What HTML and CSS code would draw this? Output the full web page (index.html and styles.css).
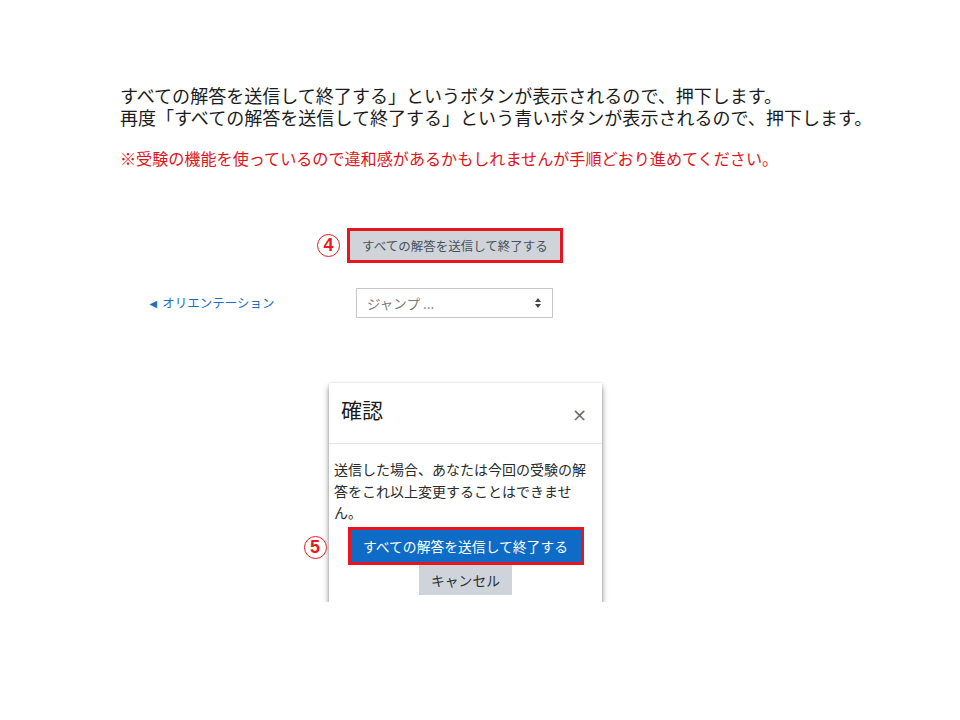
FILE: index.html
```html
<!DOCTYPE html>
<html lang="ja">
<head>
<meta charset="utf-8">
<link rel="stylesheet" href="styles.css">
</head>
<body>
<div class="intro">
  <p class="line">すべての解答を送信して終了する」というボタンが表示されるので、押下します。</p>
  <p class="line">再度「すべての解答を送信して終了する」という青いボタンが表示されるので、押下します。</p>
  <p class="note">※受験の機能を使っているので違和感があるかもしれませんが手順どおり進めてください。</p>
</div>

<div class="step4">
  <span class="num num4">4</span>
  <div class="hl hl4"><span class="btn-grey">すべての解答を送信して終了する</span></div>
</div>

<div class="navrow">
  <a class="prev">◄ オリエンテーション</a>
  <div class="select">
    <span class="sel-text">ジャンプ ...</span>
    <svg class="sel-arrows" width="8" height="12" viewBox="0 0 8 12"><path d="M4 1 L7 5 H1 Z M4 11 L1 7 H7 Z" fill="#444"/></svg>
  </div>
</div>

<div class="modal">
  <div class="modal-head">
    <span class="modal-title">確認</span>
    <span class="close">×</span>
  </div>
  <div class="modal-body">
    <p class="msg">送信した場合、あなたは今回の受験の解答をこれ以上変更することはできません。</p>
    <div class="actions">
      <div class="hl hl5">
        <span class="num num5">5</span>
        <span class="btn-blue">すべての解答を送信して終了する</span>
      </div>
      <span class="btn-cancel">キャンセル</span>
    </div>
  </div>
</div>
</body>
</html>
```
FILE: styles.css
```css
body {
  margin: 0;
  background: #fff;
  font-family: "Noto Sans CJK JP", "Noto Sans", sans-serif;
}
p { margin: 0; }

.intro {
  padding: 84px 0 0 120px;
}
.line {
  font-size: 18.05px;
  line-height: 22px;
  color: #1c1c1c;
  white-space: nowrap;
}
.note {
  margin-top: 19px;
  font-size: 16.1px;
  line-height: 22px;
  color: #e0141e;
  white-space: nowrap;
}

.step4 {
  margin: 59px 0 0 347px;
  position: relative;
  width: 216px;
}
.hl {
  border: 3px solid #e8141e;
  box-sizing: border-box;
  position: relative;
}
.hl4 {
  width: 216px;
  height: 35px;
  display: flex;
}
.btn-grey {
  flex: 1;
  background: #cfd4db;
  color: #4a5057;
  font-size: 12.5px;
  display: flex;
  align-items: center;
  justify-content: center;
}

.num {
  position: absolute;
  width: 21px;
  height: 21px;
  border: 1.5px solid #ea1a22;
  border-radius: 50%;
  color: #ea1a22;
  font-family: "Liberation Sans", sans-serif;
  font-weight: bold;
  font-size: 18px;
  display: flex;
  align-items: center;
  justify-content: center;
  background: #fff;
}
.num4 {
  left: -30px;
  top: 6px;
}
.num5 {
  left: -47px;
  top: 6px;
}

.navrow {
  display: flex;
  align-items: center;
  margin-top: 25px;
  padding-left: 147px;
}
.prev {
  width: 209px;
  color: #1f6ec4;
  font-size: 12.5px;
  line-height: 16px;
  white-space: nowrap;
}
.select {
  width: 197px;
  height: 30px;
  box-sizing: border-box;
  border: 1px solid #c8c8c8;
  display: flex;
  align-items: center;
  justify-content: space-between;
  padding: 0 10px 0 10px;
}
.sel-text {
  color: #7a7a7a;
  font-size: 13.5px;
}

.modal {
  margin: 65px 0 0 329px;
  width: 273px;
  background: #fff;
  box-shadow: 0 4px 6px rgba(0,0,0,0.45), 0 0 2px rgba(0,0,0,0.15);
}
.modal-head {
  height: 61px;
  box-sizing: border-box;
  border-bottom: 1px solid #e3e5e8;
  display: flex;
  align-items: center;
  justify-content: space-between;
  padding: 0 15px 0 12px;
}
.modal-title {
  font-size: 21px;
  color: #1a1a1a;
  margin-top: -8px;
}
.close {
  font-family: "DejaVu Sans", sans-serif;
  font-size: 18px;
  color: #6a6a6a;
  margin-top: 3px;
}
.modal-body {
  padding: 15px 5px 7px 5px;
}
.msg {
  font-size: 14px;
  line-height: 21.5px;
  color: #2a2a2a;
  padding-right: 7px;
}
.actions {
  margin-top: 3px;
  display: flex;
  flex-direction: column;
  align-items: center;
}
.hl5 {
  width: 236px;
  height: 38px;
  display: flex;
}
.btn-blue {
  flex: 1;
  background: #0f6cc6;
  color: #fff;
  font-size: 13.8px;
  display: flex;
  align-items: center;
  justify-content: center;
}
.btn-cancel {
  width: 93px;
  height: 30px;
  background: #cfd4db;
  color: #2c2f33;
  font-size: 13.8px;
  display: flex;
  align-items: center;
  justify-content: center;
}
```
